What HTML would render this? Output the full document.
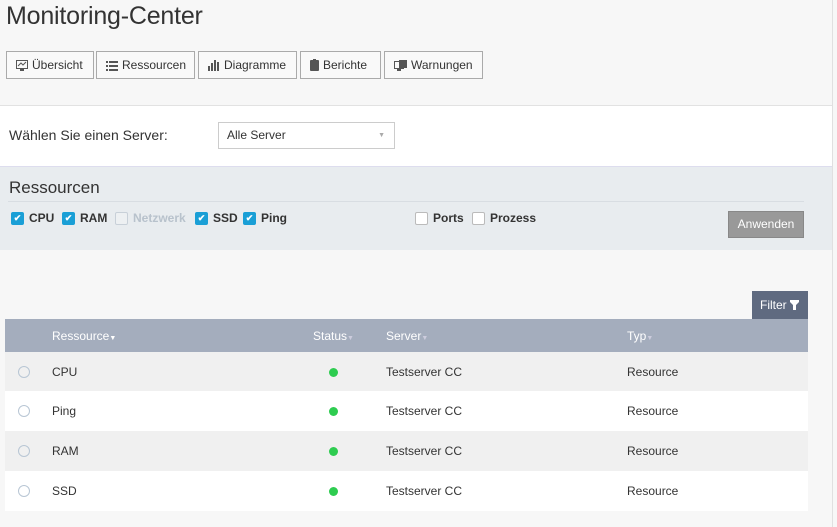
<!DOCTYPE html>
<html><head><style>
*{box-sizing:border-box;margin:0;padding:0}
body{width:837px;height:527px;background:#f7f7f7;font-family:"Liberation Sans",sans-serif;color:#333;position:relative;overflow:hidden;font-size:12px}
.a{position:absolute}
h1{position:absolute;left:6px;top:2px;font-size:25px;font-weight:normal;color:#333;letter-spacing:-0.2px}
.btn{position:absolute;top:51px;height:28px;border:1px solid #aaa;background:#f9f9f9;font-size:12px;line-height:26px;padding-left:9px;color:#333}
.btn svg{vertical-align:-2px;margin-right:4px}
.cb{position:absolute;top:212px;width:13px;height:13px;border-radius:2px;background:#1a9fd6;color:#fff;font-size:9px;line-height:13px;text-align:center;font-weight:bold}
.cb.u{background:#fff;border:1px solid #bbb}
.cbl{position:absolute;top:211px;font-size:12px;color:#333;font-weight:bold}
.row{position:absolute;left:5px;width:803px;height:40px;font-size:12px;line-height:40px}
.row span{position:absolute}
.rad{position:absolute;left:13px;top:14px;width:12px;height:12px;border:1.5px solid #b8c6d4;border-radius:50%}
.dot{position:absolute;left:324px;top:16px;width:9px;height:9px;border-radius:50%;background:#2ecc50}
.th{position:absolute;top:329px;color:#fff;font-size:12px}
</style></head><body>
<h1>Monitoring-Center</h1>
<div class="btn" style="left:6px;width:88px"><svg width="12" height="11"><rect x="0.5" y="0.5" width="11" height="8" fill="none" stroke="#555"/><path d="M2 6l3-3 2 2 3-3" stroke="#555" fill="none"/><rect x="4" y="9" width="4" height="2" fill="#555"/></svg>Übersicht</div>
<div class="btn" style="left:96px;width:99px"><svg width="12" height="10"><rect x="0" y="0" width="2" height="2" fill="#555"/><rect x="3" y="0" width="9" height="2" fill="#555"/><rect x="0" y="4" width="2" height="2" fill="#555"/><rect x="3" y="4" width="9" height="2" fill="#555"/><rect x="0" y="8" width="2" height="2" fill="#555"/><rect x="3" y="8" width="9" height="2" fill="#555"/></svg>Ressourcen</div>
<div class="btn" style="left:198px;width:99px"><svg width="12" height="11"><rect x="0" y="6" width="2" height="5" fill="#555"/><rect x="3" y="3" width="2" height="8" fill="#555"/><rect x="6" y="0" width="2" height="11" fill="#555"/><rect x="9" y="2" width="2" height="9" fill="#555"/></svg>Diagramme</div>
<div class="btn" style="left:300px;width:81px"><svg width="9" height="12"><rect x="0" y="1" width="9" height="11" rx="1" fill="#555"/><rect x="3" y="0" width="3" height="2" fill="#555"/></svg>Berichte</div>
<div class="btn" style="left:384px;width:99px"><svg width="13" height="11"><rect x="0.5" y="1.5" width="9" height="7" fill="none" stroke="#555"/><rect x="5" y="0" width="8" height="8" fill="#555"/><rect x="3" y="9" width="4" height="2" fill="#555"/></svg>Warnungen</div>
<div class="a" style="left:0;top:105px;width:832px;height:61px;background:#fff;border-top:1px solid #e2e2e2"></div>
<div class="a" style="left:9px;top:127px;font-size:14px">Wählen Sie einen Server:</div>
<div class="a" style="left:218px;top:122px;width:177px;height:27px;border:1px solid #ccc;background:#fff;font-size:12px;line-height:25px;padding-left:8px">Alle Server<span style="position:absolute;right:9px;top:0;color:#aaa;font-size:7px">▼</span></div>
<div class="a" style="left:0;top:166px;width:832px;height:84px;background:#e8ecef;border-top:1px solid #dde"></div>
<div class="a" style="left:9px;top:178px;font-size:17px;color:#333">Ressourcen</div>
<div class="a" style="left:8px;top:201px;width:796px;height:1px;background:#d8dde2"></div>
<div class="cb" style="left:11px">✔</div><div class="cbl" style="left:29px">CPU</div>
<div class="cb" style="left:62px">✔</div><div class="cbl" style="left:80px">RAM</div>
<div class="cb u" style="left:115px;border-color:#c8d0d8;background:#edf0f2"></div><div class="cbl" style="left:133px;color:#b8c2cc">Netzwerk</div>
<div class="cb" style="left:195px">✔</div><div class="cbl" style="left:213px">SSD</div>
<div class="cb" style="left:243px">✔</div><div class="cbl" style="left:261px">Ping</div>
<div class="cb u" style="left:415px"></div><div class="cbl" style="left:433px">Ports</div>
<div class="cb u" style="left:472px"></div><div class="cbl" style="left:490px">Prozess</div>
<div class="a" style="left:728px;top:211px;width:76px;height:27px;background:#999;border:1px solid #888;color:#fff;font-size:12px;line-height:25px;text-align:center">Anwenden</div>
<div class="a" style="left:752px;top:291px;width:56px;height:29px;background:#5f6a80;color:#fff;font-size:12px;line-height:28px;padding-left:8px">Filter <svg width="9" height="10" style="vertical-align:-1px"><path d="M0 0h9v2L6 5v5H3V5L0 2z" fill="#fff"/></svg></div>
<div class="a" style="left:5px;top:319px;width:803px;height:33px;background:#a4adbd"></div>
<div class="th" style="left:52px">Ressource<span style="font-size:7px">▼</span></div>
<div class="th" style="left:313px">Status<span style="font-size:7px;color:#ccd">▼</span></div>
<div class="th" style="left:386px">Server<span style="font-size:7px;color:#ccd">▼</span></div>
<div class="th" style="left:627px">Typ<span style="font-size:7px;color:#ccd">▼</span></div>
<div class="row" style="top:352px;background:#f0f0f0"><div class="rad"></div><span style="left:47px">CPU</span><div class="dot"></div><span style="left:381px">Testserver CC</span><span style="left:622px">Resource</span></div>
<div class="row" style="top:391px;background:#fff"><div class="rad"></div><span style="left:47px">Ping</span><div class="dot"></div><span style="left:381px">Testserver CC</span><span style="left:622px">Resource</span></div>
<div class="row" style="top:431px;background:#f0f0f0"><div class="rad"></div><span style="left:47px">RAM</span><div class="dot"></div><span style="left:381px">Testserver CC</span><span style="left:622px">Resource</span></div>
<div class="row" style="top:471px;background:#fff"><div class="rad"></div><span style="left:47px">SSD</span><div class="dot"></div><span style="left:381px">Testserver CC</span><span style="left:622px">Resource</span></div>
<div class="a" style="left:832px;top:0;width:1px;height:527px;background:#e0e0e0"></div>
</body></html>
